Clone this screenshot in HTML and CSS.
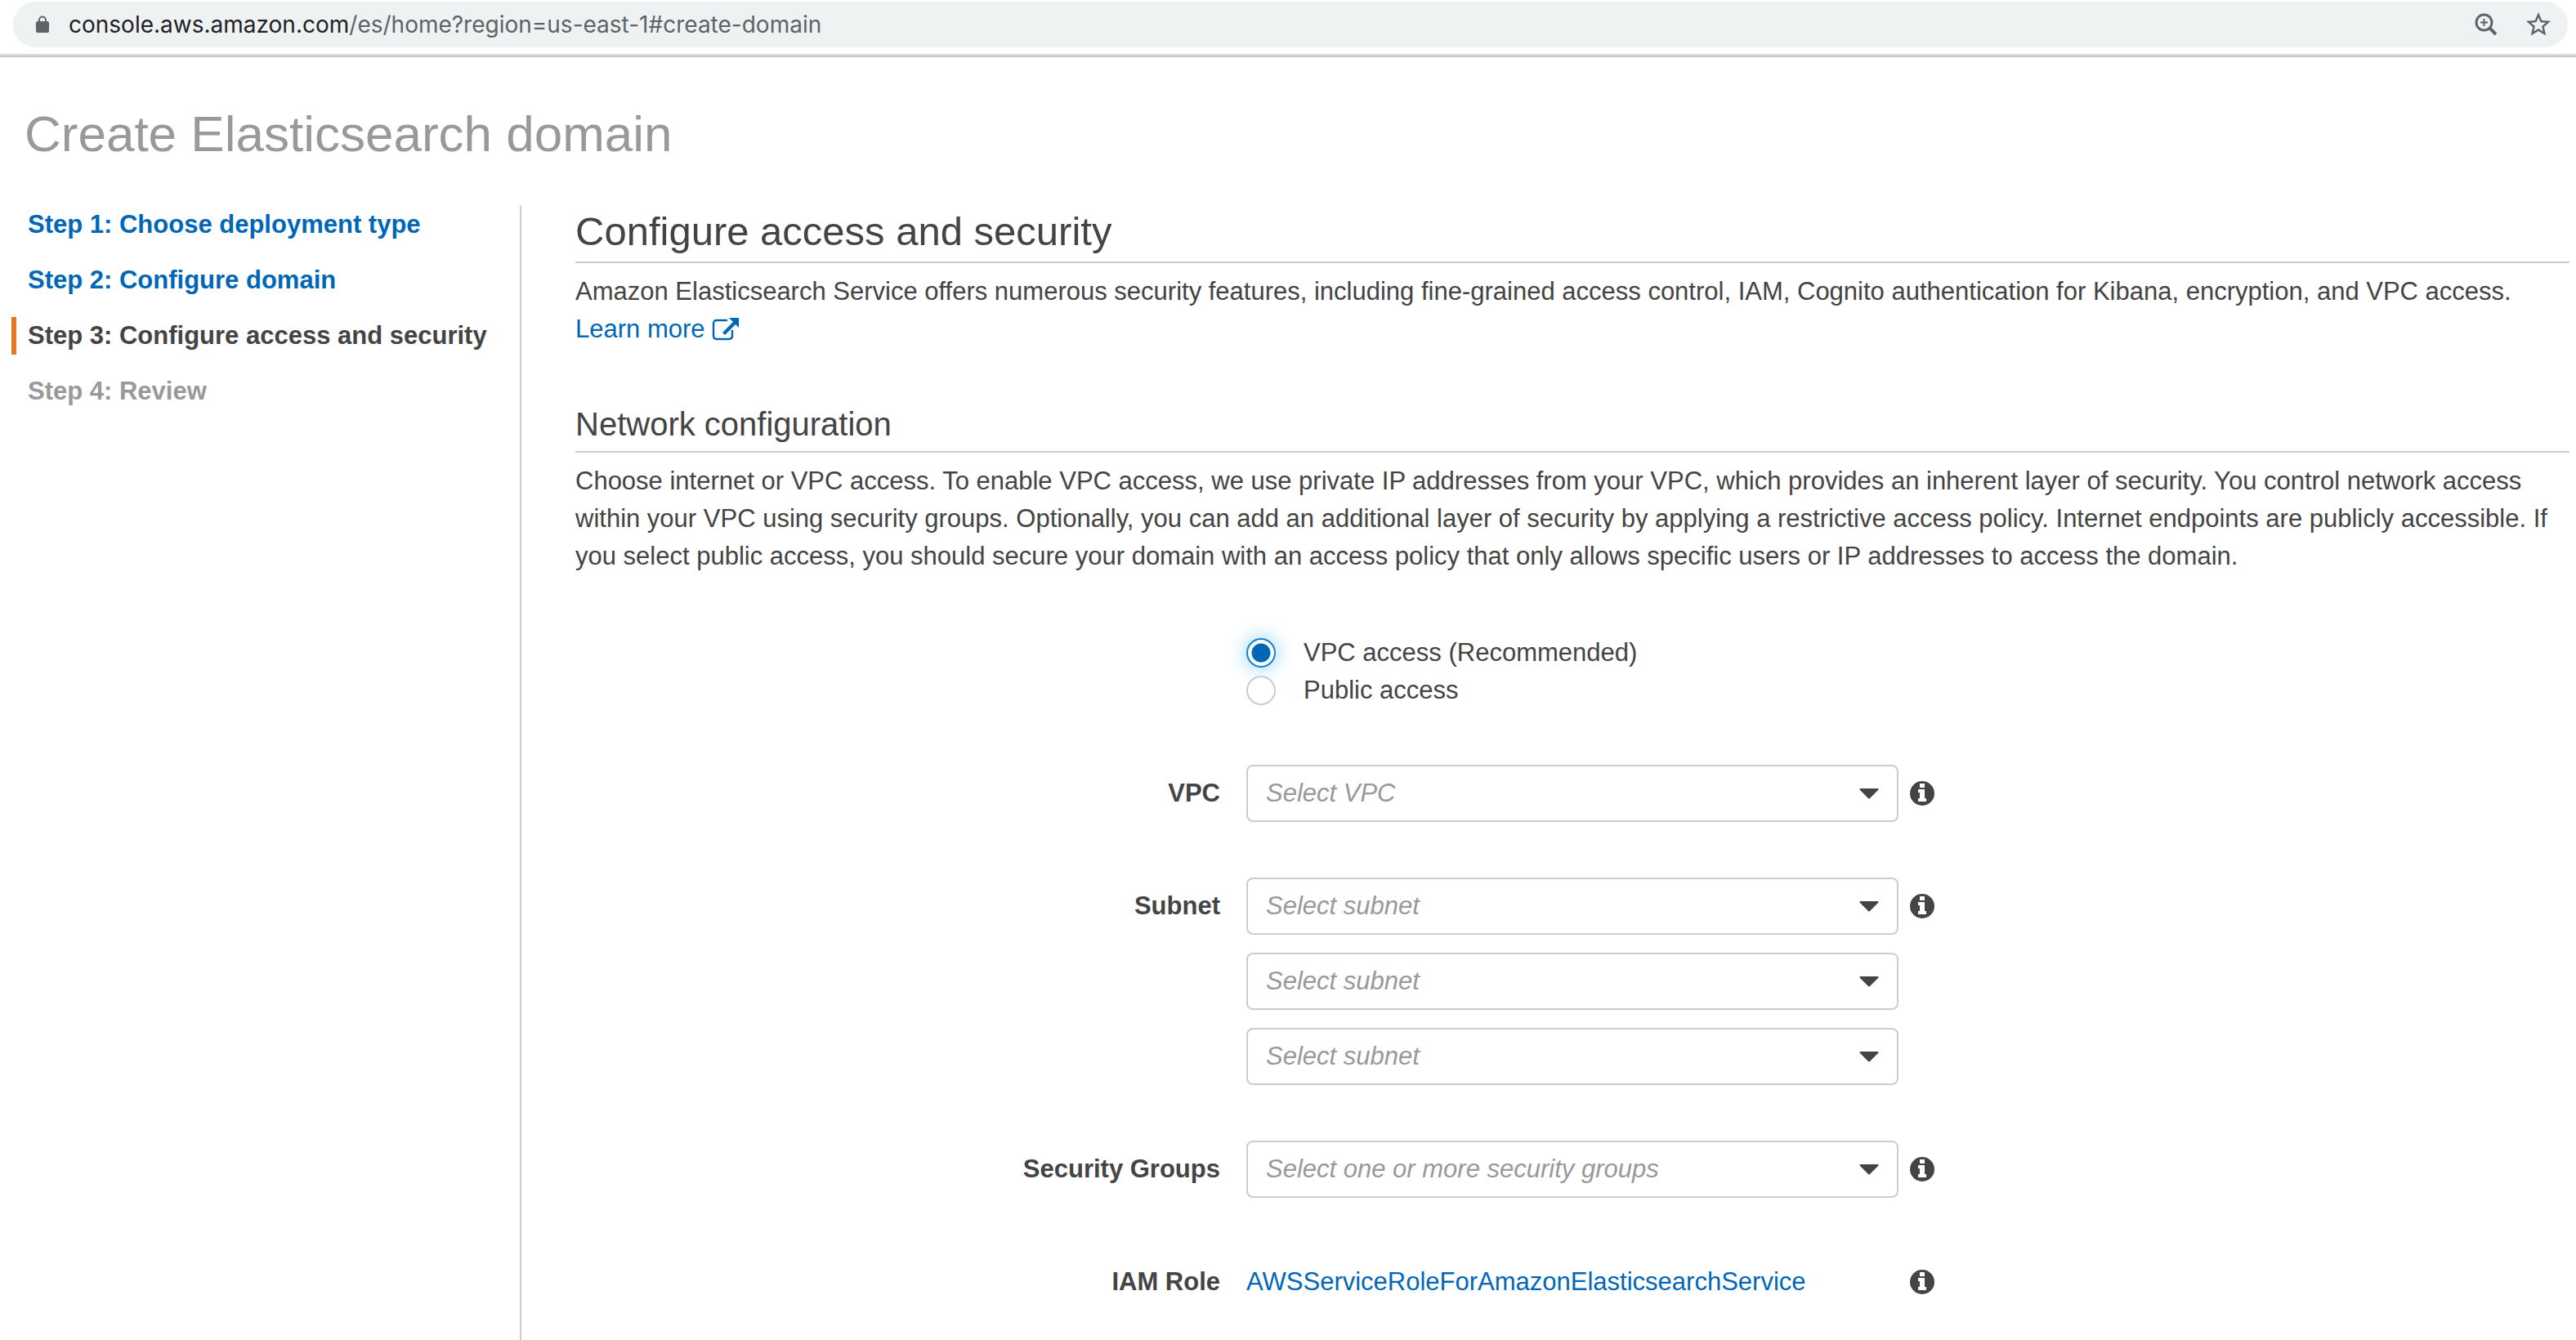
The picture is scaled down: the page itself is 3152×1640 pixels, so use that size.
FILE: index.html
```html
<!DOCTYPE html>
<html lang="en">
<head>
<meta charset="utf-8">
<title>Create Elasticsearch domain</title>
<link rel="stylesheet" href="styles.css">
</head>
<body>
<svg class="sprite" aria-hidden="true">
  <symbol id="info" viewBox="0 0 30 30">
    <circle cx="15" cy="15" r="15" fill="#444"/>
    <path d="M12 3h6v5h-6zM10 10h8v11h2v4H10v-4h2v-7h-2z" fill="#fff"/>
  </symbol>
  <symbol id="caret" viewBox="0 0 24 13">
    <path d="M1 0h22q1 1 0 2L13 12q-1 1-2 0L1 2Q0 1 1 0z" fill="#444"/>
  </symbol>
</svg>

<header class="browser-bar">
  <div class="address">
    <svg class="lock" viewBox="0 0 18 22" aria-hidden="true">
      <path d="M5 8V5.500a4 4 0 0 1 8 0V8" fill="none" stroke="#5f6368" stroke-width="2"/>
      <rect x="1" y="7" width="16" height="14" rx="2" fill="#5f6368"/>
    </svg>
    <span class="url"><span class="host">console.aws.amazon.com</span>/es/home?region=us-east-1#create-domain</span>
    <button class="bar-button" type="button" aria-label="Zoom">
      <svg class="zoom" viewBox="0 0 28 28" aria-hidden="true" fill="none" stroke="#5f6368">
        <circle cx="11.500" cy="11.500" r="9.500" stroke-width="3"/>
        <path d="M11.500 7v9M7 11.500h9" stroke-width="2"/>
        <path d="M18 18l8 8" stroke-width="4"/>
      </svg>
    </button>
    <button class="bar-button" type="button" aria-label="Bookmark">
      <svg class="star" viewBox="0 0 24 24" aria-hidden="true"><path fill="#5f6368" d="M22 9.240l-7.190-.62L12 2 9.190 8.630 2 9.240l5.460 4.730L5.820 21 12 17.270 18.180 21l-1.630-7.030L22 9.240zM12 15.400l-3.760 2.270 1-4.280-3.320-2.880 4.380-.38L12 6.100l1.710 4.040 4.380.38-3.320 2.880 1 4.280L12 15.400z"/></svg>
    </button>
  </div>
</header>

<h1 class="page-title">Create Elasticsearch domain</h1>

<div class="wizard">
  <nav class="steps" aria-label="Steps">
    <a class="step" href="#step1">Step 1: Choose deployment type</a>
    <a class="step" href="#step2">Step 2: Configure domain</a>
    <span class="step current" aria-current="step">Step 3: Configure access and security</span>
    <span class="step upcoming">Step 4: Review</span>
  </nav>

  <main class="content">
    <section class="section">
      <h2 class="heading">Configure access and security</h2>
      <p class="text">Amazon Elasticsearch Service offers numerous security features, including fine-grained access control, IAM, Cognito authentication for Kibana, encryption, and VPC access.
        <a class="learn" href="#learn">Learn more <svg class="external" viewBox="0 0 34 30" aria-hidden="true">
          <path d="M19 5H6Q2 5 2 9v15q0 4 4 4h15q4 0 4-4v-7" fill="none" stroke="currentColor" stroke-width="2.400"/>
          <path d="M21 2h12v12l-4-4-13 13-3-3L26 7z" fill="currentColor"/>
        </svg></a></p>
    </section>

    <section class="section">
      <h3 class="heading sub">Network configuration</h3>
      <p class="text">Choose internet or VPC access. To enable VPC access, we use private IP addresses from your VPC, which provides an inherent layer of security. You control network access within your VPC using security groups. Optionally, you can add an additional layer of security by applying a restrictive access policy. Internet endpoints are publicly accessible. If you select public access, you should secure your domain with an access policy that only allows specific users or IP addresses to access the domain.</p>
    </section>

    <form class="form">
      <div class="row">
        <div class="control">
          <label class="option"><input class="radio" type="radio" name="access" checked>VPC access (Recommended)</label>
          <label class="option"><input class="radio" type="radio" name="access">Public access</label>
        </div>
      </div>
      <div class="row">
        <label class="name" for="vpc">VPC</label>
        <div class="control">
          <div class="dropdown"><select class="select" id="vpc"><option>Select VPC</option></select><svg class="caret"><use href="#caret"/></svg></div>
        </div>
        <button class="help" type="button" aria-label="About VPC"><svg class="info"><use href="#info"/></svg></button>
      </div>
      <div class="row">
        <label class="name" for="subnet1">Subnet</label>
        <div class="control stack">
          <div class="dropdown"><select class="select" id="subnet1"><option>Select subnet</option></select><svg class="caret"><use href="#caret"/></svg></div>
          <div class="dropdown"><select class="select" aria-label="Second subnet"><option>Select subnet</option></select><svg class="caret"><use href="#caret"/></svg></div>
          <div class="dropdown"><select class="select" aria-label="Third subnet"><option>Select subnet</option></select><svg class="caret"><use href="#caret"/></svg></div>
        </div>
        <button class="help" type="button" aria-label="About subnets"><svg class="info"><use href="#info"/></svg></button>
      </div>
      <div class="row">
        <label class="name" for="groups">Security Groups</label>
        <div class="control">
          <div class="dropdown"><select class="select" id="groups"><option>Select one or more security groups</option></select><svg class="caret"><use href="#caret"/></svg></div>
        </div>
        <button class="help" type="button" aria-label="About security groups"><svg class="info"><use href="#info"/></svg></button>
      </div>
      <div class="row">
        <span class="name">IAM Role</span>
        <div class="control"><a class="role" href="#role">AWSServiceRoleForAmazonElasticsearchService</a></div>
        <button class="help" type="button" aria-label="About the IAM role"><svg class="info"><use href="#info"/></svg></button>
      </div>
    </form>
  </main>
</div>
</body>
</html>
```
FILE: styles.css
```css
* { box-sizing: border-box; }

body {
  margin: 0;
  min-height: 100vh;
  display: flex;
  flex-direction: column;
  background: #fff;
  color: #444;
  font: 31px/46px "Liberation Sans", Arial, sans-serif;
}

a { color: #0067b8; text-decoration: none; }
button { padding: 0; border: 0; background: none; cursor: pointer; }
.sprite { display: none; }

/* browser address bar */
.browser-bar {
  padding: 2px 10px 10px 16px;
  border-bottom: 2px solid #c9c9c9;
  box-shadow: inset 0 -2px #d6dde2;
}
.address {
  display: flex;
  align-items: center;
  height: 56px;
  padding: 0 18px 0 27px;
  border-radius: 28px;
  background: #eef2f3;
}
.lock { width: 18px; height: 22px; margin-right: 23px; }
.url { flex: 1; color: #5f6368; font: 28px/36px Inter, sans-serif; }
.host { color: #202124; }
.bar-button { margin-left: 32px; }
.bar-button svg { display: block; }
.zoom { width: 28px; height: 28px; }
.star { width: 36px; height: 36px; }

.page-title {
  margin: 0;
  padding: 56px 30px 50px;
  color: #999;
  font-size: 62px;
  font-weight: 400;
  line-height: 76px;
}

/* steps */
.wizard { display: flex; flex: 1; }
.steps {
  flex: none;
  display: flex;
  flex-direction: column;
  gap: 22px;
  width: 638px;
  padding: 0 0 0 14px;
  border-right: 2px solid #ccc;
}
.step {
  padding-left: 14px;
  border-left: 6px solid transparent;
  font-weight: 700;
}
.current { border-color: #e47523; }
.upcoming { color: #999; }

/* content */
.content { flex: 1; min-width: 0; padding: 0 8px 32px 66px; }
.section { margin-bottom: 68px; }
.heading {
  margin: 0 0 12px;
  padding-bottom: 6px;
  border-bottom: 2px solid #ccc;
  font-size: 49px;
  font-weight: 400;
  line-height: 62px;
}
.sub { padding-bottom: 8px; font-size: 40px; line-height: 50px; }
.text { margin: 0; }
.learn { white-space: nowrap; }
.external { width: 34px; height: 30px; vertical-align: -4px; }

/* form */
.form { display: flex; flex-direction: column; gap: 68px; padding-top: 4px; }
.row {
  display: grid;
  grid-template-columns: 1fr 798px 1fr;
}
.name { padding: 12px 32px 12px 0; font-weight: 700; text-align: right; }
.control { grid-column: 2; align-self: center; }
.stack { display: grid; gap: 22px; }
.option { display: flex; align-items: center; }
.radio {
  appearance: none;
  width: 36px;
  height: 36px;
  margin: 0 34px 0 0;
  border: 2px solid #ccc;
  border-radius: 50%;
  background: #fff;
}
.radio:checked {
  border-color: #0a84d6;
  background: radial-gradient(circle, #0067b8 11px, #fff 12px);
  box-shadow: 0 0 24px #8accf0;
}
.dropdown { display: grid; align-items: center; }
.select {
  grid-area: 1 / 1;
  appearance: none;
  width: 100%;
  height: 70px;
  padding: 0 60px 0 22px;
  border: 2px solid #ccc;
  border-radius: 8px;
  background: #fff;
  color: #999;
  font: italic 31px/46px "Liberation Sans", Arial, sans-serif;
}
.caret {
  grid-area: 1 / 1;
  justify-self: end;
  width: 24px;
  height: 13px;
  margin-right: 24px;
  pointer-events: none;
}
.help { align-self: start; justify-self: start; height: 70px; padding-left: 14px; }
.info { display: block; width: 30px; height: 30px; }
```
